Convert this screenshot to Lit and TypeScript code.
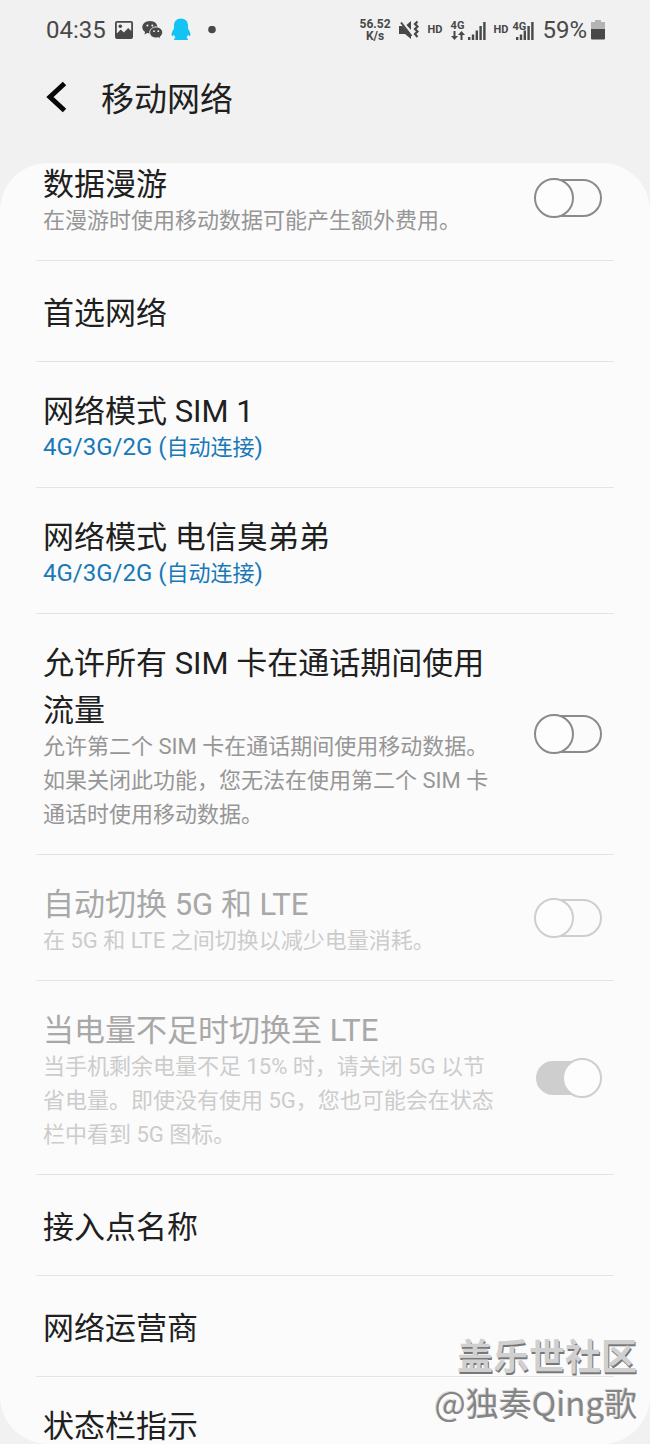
import { LitElement, html, css, nothing } from "lit";
import { customElement, property } from "lit/decorators.js";

interface Setting {
  id: string;
  title: string;
  note?: string;
  value?: string;
  toggle?: boolean;
  checked?: boolean;
  disabled?: boolean;
}

const SETTINGS: Setting[] = [
  { id: "roaming", title: "数据漫游", note: "在漫游时使用移动数据可能产生额外费用。", toggle: true },
  { id: "preferred", title: "首选网络" },
  { id: "mode1", title: "网络模式 SIM 1", value: "4G/3G/2G (自动连接)" },
  { id: "mode2", title: "网络模式 电信臭弟弟", value: "4G/3G/2G (自动连接)" },
  {
    id: "calls",
    title: "允许所有 SIM 卡在通话期间使用流量",
    note: "允许第二个 SIM 卡在通话期间使用移动数据。如果关闭此功能，您无法在使用第二个 SIM 卡通话时使用移动数据。",
    toggle: true,
  },
  {
    id: "auto5g",
    title: "自动切换 5G 和 LTE",
    note: "在 5G 和 LTE 之间切换以减少电量消耗。",
    toggle: true,
    disabled: true,
  },
  {
    id: "lowpower",
    title: "当电量不足时切换至 LTE",
    note: "当手机剩余电量不足 15% 时，请关闭 5G 以节省电量。即使没有使用 5G，您也可能会在状态栏中看到 5G 图标。",
    toggle: true,
    checked: true,
    disabled: true,
  },
  { id: "apn", title: "接入点名称" },
  { id: "operator", title: "网络运营商" },
  { id: "statusbar", title: "状态栏指示" },
];

/* Latin runs in a value are set slightly larger than the Chinese text beside them. */
const mixed = (text: string) =>
  text.split(/([ -~]+)/).map((part, i) => (i % 2 ? html`<span class="latin">${part}</span>` : part));

@customElement("status-bar")
export class StatusBar extends LitElement {
  static styles = css`
    :host {
      display: flex;
      justify-content: space-between;
      align-items: center;
      height: 60px;
      padding: 0 45px 0 46px;
      color: #484848;
      fill: currentColor;
    }
    .group {
      display: flex;
      align-items: center;
      gap: 8px;
    }
    .large {
      font-size: 24px;
      line-height: 28px;
    }
    .speed {
      font-size: 12px;
      line-height: 12px;
      font-weight: 700;
      text-align: center;
    }
    .hd {
      font-size: 11px;
      line-height: 16px;
      font-weight: 700;
    }
    .signal {
      display: flex;
      align-items: flex-end;
      gap: 3px;
    }
    .tech {
      display: flex;
      flex-direction: column;
      align-items: center;
      font-size: 11px;
      line-height: 11px;
      font-weight: 700;
    }
    .stacked {
      display: grid;
      width: 22px;
    }
    .stacked > * {
      grid-area: 1 / 1;
    }
    .stacked .tech {
      align-items: flex-start;
    }
    .stacked .bars {
      align-self: end;
      justify-self: end;
    }
    .tail {
      display: flex;
      align-items: center;
      gap: 4px;
    }
    svg {
      display: block;
    }
  `;

  private bars() {
    return html`<svg class="bars" width="18" height="19" viewBox="0 0 18 19" aria-hidden="true">
      <path d="M0 16h2.400v3H0zM3.800 13.500h2.400V19H3.800zM7.600 9.500H10V19H7.600zM11.400 5h2.400v14h-2.400zM15.200 1h2.400v18h-2.400z" />
    </svg>`;
  }

  render() {
    return html`
      <div class="group">
        <span class="large">04:35</span>
        <svg width="20" height="20" viewBox="0 0 20 20" aria-hidden="true">
          <path fill-rule="evenodd" d="M3 1h14a2 2 0 0 1 2 2v14a2 2 0 0 1-2 2H3a2 2 0 0 1-2-2V3a2 2 0 0 1 2-2zM2.800 2.800v10.700l4-4 3 3 4.400-4.500 3 3V2.800z" />
          <circle cx="6.300" cy="6.300" r="1.800" />
        </svg>
        <svg width="21" height="20" viewBox="0 0 21 20" aria-hidden="true">
          <path d="M8 1C3.600 1 .3 3.800.3 7.300c0 2 1.100 3.700 2.800 4.800L2.400 14.500l2.800-1.400c1 .3 1.900.4 2.800.4 4.400 0 7.500-2.800 7.500-6.200S12.400 1 8 1z" />
          <path stroke="#f1f1f1" d="M14.200 6.900c-3.700 0-6.500 2.500-6.500 5.600s2.800 5.500 6.500 5.500c.8 0 1.600-.1 2.300-.3l2.200 1.200-.6-2c1.500-1.100 2.500-2.600 2.500-4.400 0-3.100-2.800-5.600-6.400-5.600z" />
          <g fill="#f1f1f1">
            <circle cx="5.400" cy="5.400" r="1" /><circle cx="10.300" cy="5.400" r="1" />
            <circle cx="12" cy="11.200" r=".9" /><circle cx="16.300" cy="11.200" r=".9" />
          </g>
        </svg>
        <svg width="20" height="24" viewBox="0 0 20 24" fill="#12c3f4" aria-hidden="true">
          <path d="M10 .5C5.700.5 3 3.400 3 7.500v3C1.800 12.300.6 14.600.6 16.600c0 1.300.6 1.700 1.100 1.400.5-.2.900-.6 1.300-1.200.3 1.200.8 2.100 1.500 2.900-.9.400-1.400 1-1.400 1.700V22h13.800v-.6c0-.7-.5-1.300-1.400-1.700.7-.8 1.200-1.700 1.500-2.900.4.600.8 1 1.300 1.200.5.300 1.100-.1 1.100-1.400 0-2-1.200-4.300-2.400-6.100v-3C17 3.400 14.300.5 10 .5z" />
        </svg>
        <svg width="26" height="8" viewBox="0 0 26 8" aria-hidden="true"><circle cx="13" cy="3.500" r="3.800" /></svg>
      </div>
      <div class="group">
        <span class="speed">56.52<br />K/s</span>
        <svg width="21" height="20" viewBox="0 0 21 20" aria-hidden="true">
          <path d="M0 6h3.500L12 15v4l-6-5H0zM7.500 5 12 1v9z" />
          <path d="M2 2.500 12.500 16" fill="none" stroke="currentColor" stroke-width="2" />
          <path d="M18.500 1.500 16 4l2.500 2.500L16 9l2.500 2.500L16 14l2.500 3" fill="none" stroke="currentColor" stroke-width="2.200" />
        </svg>
        <span class="hd">HD</span>
        <span class="signal">
          <span class="tech">4G
            <svg width="14" height="9" viewBox="0 0 14 9" aria-hidden="true">
              <path d="M2.500 0h2v5H7L3.500 9 0 5h2.500zM9.500 9h2V4H14l-3.500-4L7 4h2.500z" />
            </svg>
          </span>
          ${this.bars()}
        </span>
        <span class="tail">
          <span class="hd">HD</span>
          <span class="stacked"><span class="tech">4G</span>${this.bars()}</span>
        </span>
        <span class="tail">
          <span class="large">59%</span>
          <svg width="14" height="20" viewBox="0 0 14 20" aria-hidden="true">
            <path fill="#b4b4b4" d="M4 0h6v2h4v8H0V2h4z" /><path d="M0 9h14v9.500a1 1 0 0 1-1 1H1a1 1 0 0 1-1-1z" />
          </svg>
        </span>
      </div>
    `;
  }
}

@customElement("setting-row")
export class SettingRow extends LitElement {
  @property({ attribute: false }) setting!: Setting;

  static styles = css`
    :host {
      display: block;
      border-bottom: 1px solid #e4e4e4;
    }
    :host(:last-child) {
      border-bottom: none;
    }
    .row {
      box-sizing: border-box;
      display: flex;
      align-items: center;
      gap: 32px;
      width: 100%;
      min-height: 100px;
      padding: 22px 12px 22px 7px;
      border: none;
      background: none;
      color: #202020;
      font: inherit;
      text-align: left;
    }
    :host(:last-child) .row {
      align-items: flex-start;
    }
    .text {
      flex: 1;
      display: block;
      min-width: 0;
      padding-top: 4px;
    }
    .title {
      display: block;
      font-size: 31px;
      line-height: 47px;
    }
    .detail {
      display: block;
      margin-top: -4px;
      font-size: 22px;
      line-height: 34px;
      color: #969696;
    }
    .value {
      color: #1878b8;
    }
    .latin {
      font-size: 24px;
      line-height: 1;
    }
    .disabled .title {
      color: #a8a8a8;
    }
    .disabled .detail {
      color: #cccccc;
    }
    .switch {
      appearance: none;
      flex: none;
      display: grid;
      align-items: center;
      width: 68px;
      height: 40px;
      margin: 0;
      color: #8a8a8a;
    }
    .switch::before,
    .switch::after {
      content: "";
      box-sizing: border-box;
      grid-area: 1 / 1;
      border: 2px solid currentColor;
      border-radius: 20px;
    }
    .switch::before {
      justify-self: end;
      width: 64px;
      height: 38px;
    }
    .switch::after {
      width: 40px;
      height: 40px;
      background: #fdfdfd;
    }
    .switch:checked::before {
      justify-self: start;
      height: 34px;
      margin-left: 2px;
      background: currentColor;
    }
    .switch:checked::after {
      justify-self: end;
    }
    .switch:disabled {
      color: #cecece;
    }
  `;

  render() {
    const s = this.setting;
    const text = html`
      <span class="text">
        <span class="title">${s.title}</span>
        ${s.note ? html`<span class="detail">${s.note}</span>` : nothing}
        ${s.value ? html`<span class="detail value">${mixed(s.value)}</span>` : nothing}
      </span>
    `;
    return s.toggle
      ? html`<label class="row ${s.disabled ? "disabled" : ""}" for=${s.id}>
          ${text}
          <input class="switch" type="checkbox" role="switch" id=${s.id} .checked=${!!s.checked} ?disabled=${s.disabled} />
        </label>`
      : html`<button class="row" type="button">${text}</button>`;
  }
}

@customElement("app-root")
export class AppRoot extends LitElement {
  static styles = css`
    :host {
      position: relative;
      display: flex;
      flex-direction: column;
      height: 100vh;
      overflow: hidden;
      background: #f1f1f1;
      color: #202020;
      font-family: Roboto, "Noto Sans CJK SC", sans-serif;
    }
    .header {
      display: flex;
      align-items: center;
      gap: 24px;
      height: 78px;
      margin-bottom: 25px;
      padding: 0 36px;
    }
    .back {
      display: grid;
      place-items: center;
      width: 41px;
      height: 48px;
      padding: 0 0 4px;
      border: none;
      background: none;
      color: #080808;
    }
    .heading {
      margin: 0;
      padding-top: 2px;
      font-size: 33px;
      line-height: 48px;
      font-weight: 400;
    }
    .card {
      flex: 1;
      min-height: 0;
      overflow: hidden;
      padding: 0 36px;
      border-radius: 48px;
      background: #fbfbfb;
    }
    /* The list rests partly scrolled under the header. */
    .list {
      margin-top: -28px;
    }
    .watermark {
      position: absolute;
      right: 13px;
      bottom: 18px;
      font-family: "Noto Sans CJK SC", sans-serif;
      text-align: right;
      pointer-events: none;
    }
    .community {
      margin: 0;
      font-size: 36px;
      line-height: 48px;
      font-weight: 700;
      color: #d0d0d0;
      text-shadow: 1px 2px 0 #777777;
    }
    .author {
      margin: 0;
      font-size: 33px;
      line-height: 48px;
      color: #858585;
      text-shadow: -1px -1px 0 #d8d8d8;
    }
  `;

  render() {
    return html`
      <status-bar></status-bar>
      <header class="header">
        <button class="back" type="button" aria-label="返回">
          <svg width="22" height="32" viewBox="0 0 22 32" aria-hidden="true">
            <path d="M18.500 2.500 4 16l14.500 13.500" fill="none" stroke="currentColor" stroke-width="5" />
          </svg>
        </button>
        <h1 class="heading">移动网络</h1>
      </header>
      <main class="card">
        <div class="list">${SETTINGS.map((s) => html`<setting-row .setting=${s}></setting-row>`)}</div>
      </main>
      <div class="watermark">
        <p class="community">盖乐世社区</p>
        <p class="author">@独奏Qing歌</p>
      </div>
    `;
  }
}
